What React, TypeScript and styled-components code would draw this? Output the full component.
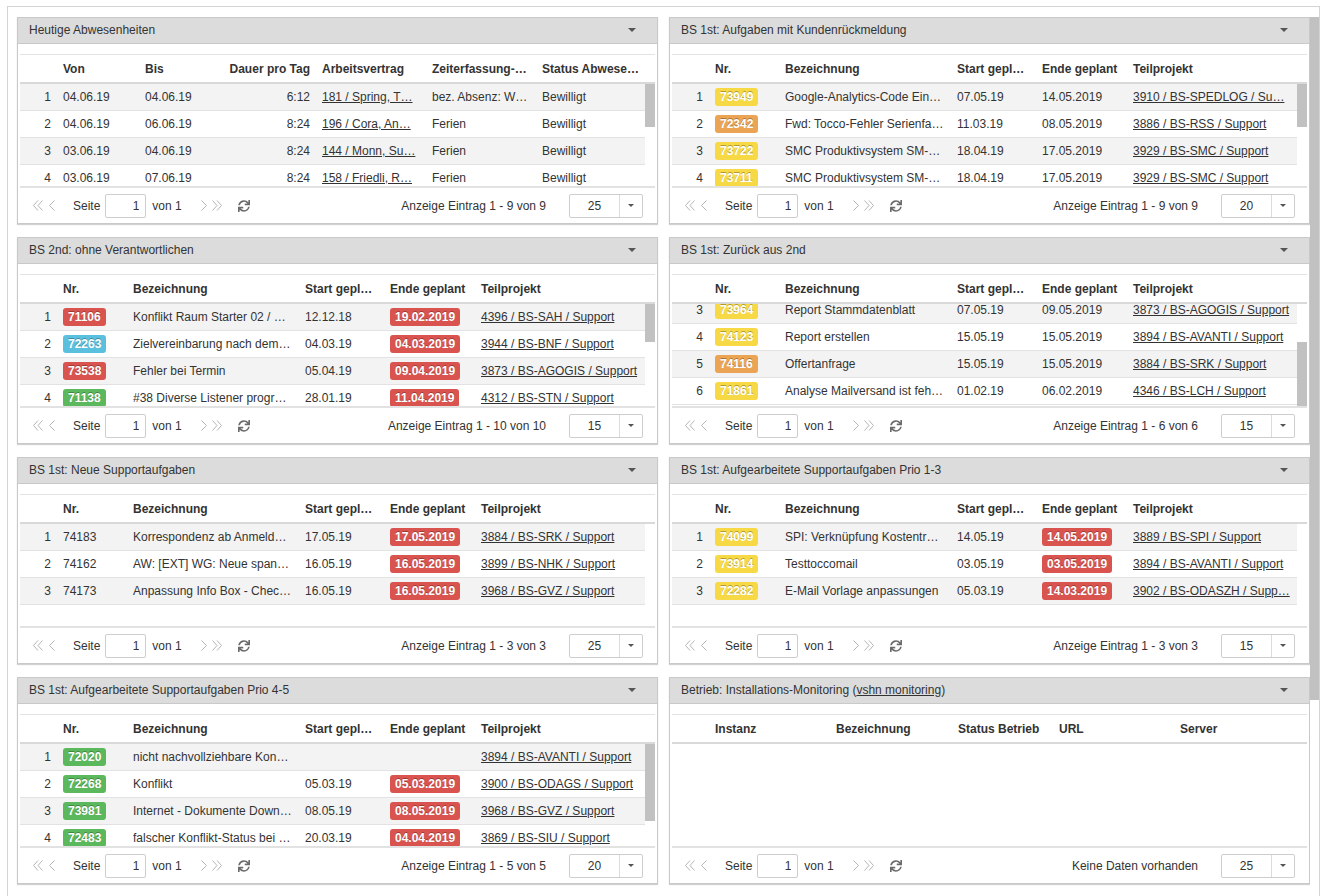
import React from "react";
import styled, { createGlobalStyle } from "styled-components";
import { FaSync } from "react-icons/fa";

const GlobalStyle = createGlobalStyle`
  html, body { margin: 0; padding: 0; background: #fff; }
  body {
    font-family: "Liberation Sans", Arial, Helvetica, sans-serif;
    font-size: 12px;
    color: #333;
    overflow: hidden;
  }
  * { box-sizing: border-box; }
`;

type Tone = "red" | "blue" | "green" | "yellow" | "orange";
const TONES: Record<Tone, string> = {
  red: "#d9534f",
  blue: "#5bc0de",
  green: "#5cb85c",
  yellow: "#f6d945",
  orange: "#eaa453",
};

type Cell =
  | string
  | { kind: "badge"; text: string; tone: Tone }
  | { kind: "link"; text: string };

type Column = { label: string; align?: "left" | "right" };

type PanelData = {
  title: React.ReactNode;
  cols: string;
  head: Column[];
  rows: Cell[][];
  total: number;
  info: string;
  size: string;
  scrollEnd?: boolean;
};

const ROW_H = 27;
const VIEW_H = 102;
const PAGE_VIEW = 879;
const PAGE_CONTENT = 1131;

/* ---------- layout ---------- */

const Frame = styled.div`
  margin: 6px 0 0 7px;
  width: 1313px;
  height: 890px;
  border: 1px solid #d3d3d3;
  border-bottom: none;
  padding-top: 10px;
  display: flex;
`;

const PageView = styled.div`
  flex: 1;
  height: ${PAGE_VIEW}px;
  overflow: hidden;
  padding-left: 9px;
`;

const PageTrack = styled.div`
  width: 9px;
  flex: none;
  height: ${PAGE_VIEW}px;
  position: relative;
  background: #fff;
`;

const Thumb = styled.div`
  position: absolute;
  left: 0;
  right: 0;
  background: #c1c1c1;
`;

const Dashboard = styled.div`
  display: grid;
  grid-template-columns: 641px 641px;
  column-gap: 11px;
  row-gap: 13px;
`;

const Panel = styled.section`
  height: 207px;
  display: flex;
  flex-direction: column;
  background: #fff;
  border: 1px solid #c9c9c9;
  box-shadow: 0 1px 1px rgba(0, 0, 0, 0.18);
`;

const PanelHeader = styled.header`
  height: 26px;
  flex: none;
  display: flex;
  align-items: center;
  justify-content: space-between;
  padding: 0 21px 1px 11px;
  background: #dcdcdc;
  border-bottom: 1px solid #c9c9c9;
  color: #333;
`;

const HeaderLink = styled.a`
  color: #333;
  text-decoration: underline;
`;

const Caret = styled.span<{ $size?: number }>`
  display: inline-block;
  width: 0;
  height: 0;
  border-left: ${(p) => p.$size ?? 4}px solid transparent;
  border-right: ${(p) => p.$size ?? 4}px solid transparent;
  border-top: ${(p) => p.$size ?? 4}px solid #555;
`;

const GridArea = styled.div`
  flex: 1;
  display: flex;
  flex-direction: column;
  padding: 10px 2px 0;
  min-height: 0;
`;

const HeadRow = styled.div<{ $cols: string }>`
  display: grid;
  grid-template-columns: ${(p) => p.$cols};
  height: 30px;
  flex: none;
  align-items: center;
  border-top: 1px solid #e3e3e3;
  border-bottom: 2px solid #d9d9d9;
  font-weight: bold;
  color: #333;
`;

const Body = styled.div`
  height: ${VIEW_H}px;
  flex: none;
  display: flex;
`;

const Viewport = styled.div`
  flex: 1;
  min-width: 0;
  overflow: hidden;
`;

const Track = styled.div`
  width: 10px;
  flex: none;
  position: relative;
`;

const Row = styled.div<{ $cols: string; $odd: boolean }>`
  display: grid;
  grid-template-columns: ${(p) => p.$cols};
  height: ${ROW_H}px;
  align-items: center;
  border-bottom: 1px solid #e2e2e2;
  background: ${(p) => (p.$odd ? "#f3f3f3" : "#fff")};
`;

const Cell = styled.div<{ $align?: "left" | "right" }>`
  padding: 0 6px;
  white-space: nowrap;
  overflow: hidden;
  text-overflow: ellipsis;
  text-align: ${(p) => p.$align ?? "left"};
  line-height: 16px;
`;

const Link = styled.a`
  color: #333;
  text-decoration: underline;
`;

const Badge = styled.span<{ $tone: Tone }>`
  display: inline-block;
  padding: 3px 5px;
  line-height: 12px;
  font-size: 12px;
  font-weight: bold;
  color: #fff;
  text-shadow: 0 -1px 0 rgba(0, 0, 0, 0.3);
  border-radius: 3px;
  background: ${(p) => TONES[p.$tone]};
  vertical-align: middle;
`;

/* ---------- pager ---------- */

const Pager = styled.div`
  height: 37px;
  flex: none;
  display: flex;
  align-items: center;
  padding: 0 12px 0 13px;
  border-top: 2px solid #e2e2e2;
  color: #333;
`;

const NavIcon = styled.svg<{ $gap: number }>`
  flex: none;
  margin-left: ${(p) => p.$gap}px;
  stroke: #b5b5b5;
  fill: none;
  stroke-width: 1;
`;

const PagerText = styled.span<{ $gap: number }>`
  margin-left: ${(p) => p.$gap}px;
  white-space: nowrap;
`;

const PageInput = styled.input`
  margin-left: 5px;
  width: 41px;
  height: 24px;
  border: 1px solid #cdcdcd;
  border-radius: 2px;
  padding: 0 6px;
  text-align: right;
  font: inherit;
  color: #333;
  background: #fff;
`;

const Refresh = styled.span`
  margin-left: 16px;
  display: inline-flex;
  color: #6b6b6b;
`;

const Info = styled.span`
  margin-left: auto;
  margin-right: 23px;
  white-space: nowrap;
`;

const SizeSelect = styled.div`
  width: 74px;
  height: 24px;
  display: flex;
  border: 1px solid #cdcdcd;
  border-radius: 2px;
  background: #fff;
`;

const SizeValue = styled.span`
  flex: 1;
  display: flex;
  align-items: center;
  justify-content: center;
`;

const SizeCaret = styled.span`
  width: 23px;
  display: flex;
  align-items: center;
  justify-content: center;
  border-left: 1px solid #dcdcdc;
`;

function Chevrons({ dir, double, gap }: { dir: "l" | "r"; double?: boolean; gap: number }) {
  const w = double ? 10 : 6;
  const pts =
    dir === "l"
      ? double
        ? ["5,0.5 0.5,5.5 5,10.5", "9.5,0.5 5,5.5 9.5,10.5"]
        : ["5.5,0.5 0.5,5.5 5.5,10.5"]
      : double
      ? ["0.5,0.5 5,5.5 0.5,10.5", "5,0.5 9.5,5.5 5,10.5"]
      : ["0.5,0.5 5.5,5.5 0.5,10.5"];
  return (
    <NavIcon $gap={gap} width={w} height={11} viewBox={`0 0 ${w} 11`}>
      {pts.map((p) => (
        <polyline key={p} points={p} />
      ))}
    </NavIcon>
  );
}

/* ---------- data ---------- */

const b = (text: string, tone: Tone): Cell => ({ kind: "badge", text, tone });
const l = (text: string): Cell => ({ kind: "link", text });

const TASK_COLS = "37px 70px 172px 85px 91px 1fr";
const TASK_HEAD: Column[] = [
  { label: "", align: "right" },
  { label: "Nr." },
  { label: "Bezeichnung" },
  { label: "Start gepl…" },
  { label: "Ende geplant" },
  { label: "Teilprojekt" },
];

type T = [number, string, Tone | null, string, string, string, boolean, string];
const task = (rows: T[]): Cell[][] =>
  rows.map(([n, nr, tone, bez, start, ende, late, teil]) => [
    String(n),
    tone ? b(nr, tone) : nr,
    bez,
    start,
    late ? b(ende, "red") : ende,
    l(teil),
  ]);

const ABS_COLS = "37px 82px 80px 97px 110px 110px 1fr";
const ABS_HEAD: Column[] = [
  { label: "", align: "right" },
  { label: "Von" },
  { label: "Bis" },
  { label: "Dauer pro Tag", align: "right" },
  { label: "Arbeitsvertrag" },
  { label: "Zeiterfassung-…" },
  { label: "Status Abwese…" },
];

const absRows: Cell[][] = [
  ["04.06.19", "04.06.19", "6:12", "181 / Spring, T…", "bez. Absenz: W…"],
  ["04.06.19", "06.06.19", "8:24", "196 / Cora, An…", "Ferien"],
  ["03.06.19", "04.06.19", "8:24", "144 / Monn, Su…", "Ferien"],
  ["03.06.19", "07.06.19", "8:24", "158 / Friedli, R…", "Ferien"],
].map((r, i) => [String(i + 1), r[0], r[1], r[2], l(r[3]), r[4], "Bewilligt"]);

const MON_COLS = "37px 121px 122px 101px 121px 1fr";
const MON_HEAD: Column[] = [
  { label: "" },
  { label: "Instanz" },
  { label: "Bezeichnung" },
  { label: "Status Betrieb" },
  { label: "URL" },
  { label: "Server" },
];

const PANELS: PanelData[] = [
  {
    title: "Heutige Abwesenheiten",
    cols: ABS_COLS,
    head: ABS_HEAD,
    rows: absRows,
    total: 9,
    info: "Anzeige Eintrag 1 - 9 von 9",
    size: "25",
  },
  {
    title: "BS 1st: Aufgaben mit Kundenrückmeldung",
    cols: TASK_COLS,
    head: TASK_HEAD,
    rows: task([
      [1, "73949", "yellow", "Google-Analytics-Code Ein…", "07.05.19", "14.05.2019", false, "3910 / BS-SPEDLOG / Su…"],
      [2, "72342", "orange", "Fwd: Tocco-Fehler Serienfa…", "11.03.19", "08.05.2019", false, "3886 / BS-RSS / Support"],
      [3, "73722", "yellow", "SMC Produktivsystem SM-…", "18.04.19", "17.05.2019", false, "3929 / BS-SMC / Support"],
      [4, "73711", "yellow", "SMC Produktivsystem SM-…", "18.04.19", "17.05.2019", false, "3929 / BS-SMC / Support"],
    ]),
    total: 9,
    info: "Anzeige Eintrag 1 - 9 von 9",
    size: "20",
  },
  {
    title: "BS 2nd: ohne Verantwortlichen",
    cols: TASK_COLS,
    head: TASK_HEAD,
    rows: task([
      [1, "71106", "red", "Konflikt Raum Starter 02 / …", "12.12.18", "19.02.2019", true, "4396 / BS-SAH / Support"],
      [2, "72263", "blue", "Zielvereinbarung nach dem…", "04.03.19", "04.03.2019", true, "3944 / BS-BNF / Support"],
      [3, "73538", "red", "Fehler bei Termin", "05.04.19", "09.04.2019", true, "3873 / BS-AGOGIS / Support"],
      [4, "71138", "green", "#38 Diverse Listener progr…", "28.01.19", "11.04.2019", true, "4312 / BS-STN / Support"],
    ]),
    total: 10,
    info: "Anzeige Eintrag 1 - 10 von 10",
    size: "15",
  },
  {
    title: "BS 1st: Zurück aus 2nd",
    cols: TASK_COLS,
    head: TASK_HEAD,
    scrollEnd: true,
    rows: task([
      [3, "73964", "yellow", "Report Stammdatenblatt", "07.05.19", "09.05.2019", false, "3873 / BS-AGOGIS / Support"],
      [4, "74123", "yellow", "Report erstellen", "15.05.19", "15.05.2019", false, "3894 / BS-AVANTI / Support"],
      [5, "74116", "orange", "Offertanfrage", "15.05.19", "15.05.2019", false, "3884 / BS-SRK / Support"],
      [6, "71861", "yellow", "Analyse Mailversand ist feh…", "01.02.19", "06.02.2019", false, "4346 / BS-LCH / Support"],
    ]),
    total: 6,
    info: "Anzeige Eintrag 1 - 6 von 6",
    size: "15",
  },
  {
    title: "BS 1st: Neue Supportaufgaben",
    cols: TASK_COLS,
    head: TASK_HEAD,
    rows: task([
      [1, "74183", null, "Korrespondenz ab Anmeld…", "17.05.19", "17.05.2019", true, "3884 / BS-SRK / Support"],
      [2, "74162", null, "AW: [EXT] WG: Neue span…", "16.05.19", "16.05.2019", true, "3899 / BS-NHK / Support"],
      [3, "74173", null, "Anpassung Info Box - Chec…", "16.05.19", "16.05.2019", true, "3968 / BS-GVZ / Support"],
    ]),
    total: 3,
    info: "Anzeige Eintrag 1 - 3 von 3",
    size: "25",
  },
  {
    title: "BS 1st: Aufgearbeitete Supportaufgaben Prio 1-3",
    cols: TASK_COLS,
    head: TASK_HEAD,
    rows: task([
      [1, "74099", "yellow", "SPI: Verknüpfung Kostentr…", "14.05.19", "14.05.2019", true, "3889 / BS-SPI / Support"],
      [2, "73914", "yellow", "Testtoccomail", "03.05.19", "03.05.2019", true, "3894 / BS-AVANTI / Support"],
      [3, "72282", "yellow", "E-Mail Vorlage anpassungen", "05.03.19", "14.03.2019", true, "3902 / BS-ODASZH / Supp…"],
    ]),
    total: 3,
    info: "Anzeige Eintrag 1 - 3 von 3",
    size: "15",
  },
  {
    title: "BS 1st: Aufgearbeitete Supportaufgaben Prio 4-5",
    cols: TASK_COLS,
    head: TASK_HEAD,
    rows: task([
      [1, "72020", "green", "nicht nachvollziehbare Kon…", "", "", false, "3894 / BS-AVANTI / Support"],
      [2, "72268", "green", "Konflikt", "05.03.19", "05.03.2019", true, "3900 / BS-ODAGS / Support"],
      [3, "73981", "green", "Internet - Dokumente Down…", "08.05.19", "08.05.2019", true, "3968 / BS-GVZ / Support"],
      [4, "72483", "green", "falscher Konflikt-Status bei …", "20.03.19", "04.04.2019", true, "3869 / BS-SIU / Support"],
    ]),
    total: 5,
    info: "Anzeige Eintrag 1 - 5 von 5",
    size: "20",
  },
  {
    title: (
      <span>
        Betrieb: Installations-Monitoring (<HeaderLink href="#">vshn monitoring</HeaderLink>)
      </span>
    ),
    cols: MON_COLS,
    head: MON_HEAD,
    rows: [],
    total: 0,
    info: "Keine Daten vorhanden",
    size: "25",
  },
];

/* ---------- components ---------- */

function renderCell(c: Cell) {
  if (typeof c === "string") return c;
  if (c.kind === "badge") return <Badge $tone={c.tone}>{c.text}</Badge>;
  return <Link href="#">{c.text}</Link>;
}

function GridPanel({ data }: { data: PanelData }) {
  const contentH = data.total * ROW_H + 1;
  const overflow = contentH > VIEW_H;
  const offset = data.scrollEnd && overflow ? contentH - VIEW_H : 0;
  const firstRow = data.scrollEnd ? data.total - data.rows.length : 0;
  const shift = firstRow * ROW_H - offset;
  const thumbH = (VIEW_H * VIEW_H) / contentH;
  const thumbTop = (offset * VIEW_H) / contentH;

  return (
    <Panel>
      <PanelHeader>
        {data.title}
        <Caret />
      </PanelHeader>
      <GridArea>
        <HeadRow $cols={data.cols}>
          {data.head.map((h, i) => (
            <Cell key={i} $align={h.align}>
              {h.label}
            </Cell>
          ))}
        </HeadRow>
        <Body>
          <Viewport>
            <div style={{ marginTop: shift }}>
              {data.rows.map((r, ri) => (
                <Row key={ri} $cols={data.cols} $odd={(firstRow + ri) % 2 === 0}>
                  {r.map((c, ci) => (
                    <Cell key={ci} $align={data.head[ci]?.align}>
                      {renderCell(c)}
                    </Cell>
                  ))}
                </Row>
              ))}
            </div>
          </Viewport>
          <Track>
            {overflow && <Thumb style={{ top: thumbTop, height: thumbH }} />}
          </Track>
        </Body>
        <Pager>
          <Chevrons dir="l" double gap={0} />
          <Chevrons dir="l" gap={6} />
          <PagerText $gap={18}>Seite</PagerText>
          <PageInput readOnly value="1" />
          <PagerText $gap={6}>von 1</PagerText>
          <Chevrons dir="r" gap={19} />
          <Chevrons dir="r" double gap={5} />
          <Refresh>
            <FaSync size={12} />
          </Refresh>
          <Info>{data.info}</Info>
          <SizeSelect>
            <SizeValue>{data.size}</SizeValue>
            <SizeCaret>
              <Caret $size={3} />
            </SizeCaret>
          </SizeSelect>
        </Pager>
      </GridArea>
    </Panel>
  );
}

export default function App() {
  const pageThumb = (PAGE_VIEW * PAGE_VIEW) / PAGE_CONTENT;
  return (
    <>
      <GlobalStyle />
      <Frame>
        <PageView>
          <Dashboard>
            {PANELS.map((p, i) => (
              <GridPanel key={i} data={p} />
            ))}
          </Dashboard>
        </PageView>
        <PageTrack>
          <Thumb style={{ top: 0, height: pageThumb }} />
        </PageTrack>
      </Frame>
    </>
  );
}
